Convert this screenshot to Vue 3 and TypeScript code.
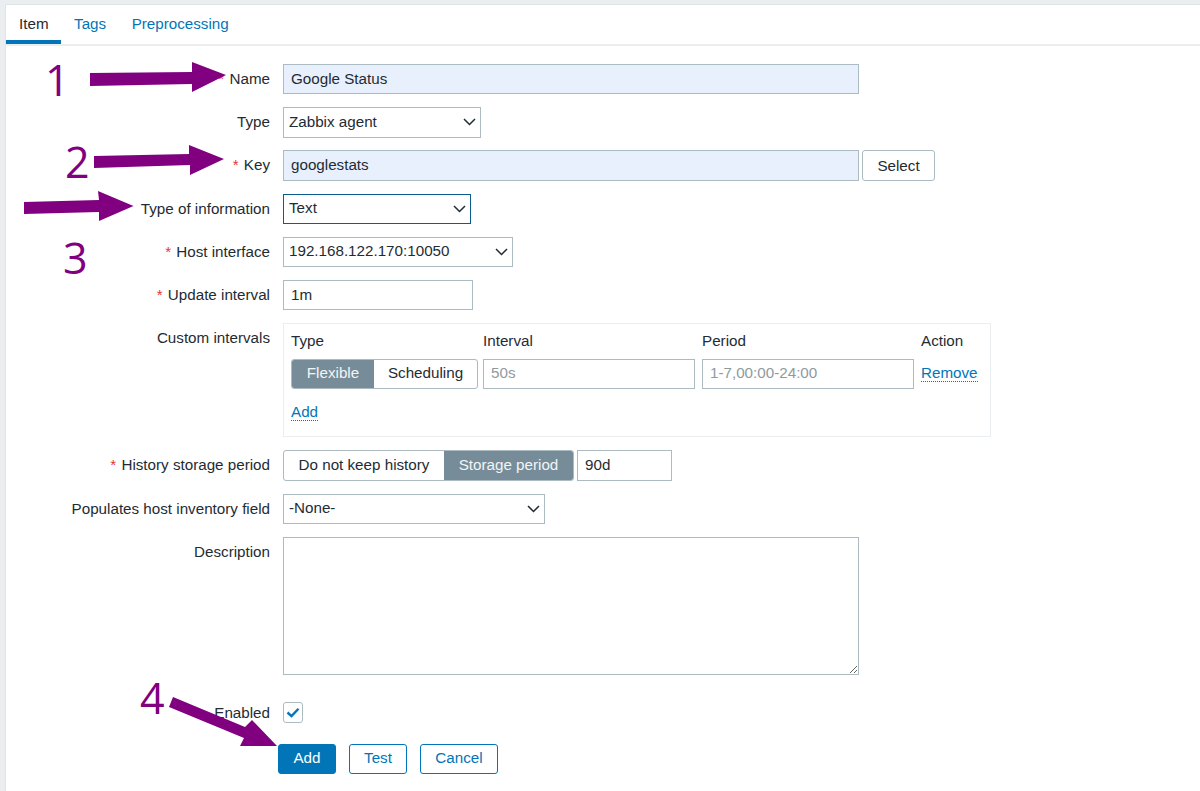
<script setup lang="ts">
const tabs = ['Item', 'Tags', 'Preprocessing'];

const arrows = [
  '90,73 192,72 192,62 226,75 192,92 192,84 90,86',
  '94,156 189,154 189,145 224,159 190,175 190,165 94,168',
  '24,202 99,200 98,191 133.5,206 99,221 99,212 24,214',
  '173,697 245,727 252,720 277,746 240,746 244,738 169,707',
];

const numbers = [
  { text: '1', x: 45, y: 96 },
  { text: '2', x: 65, y: 178 },
  { text: '3', x: 63, y: 274 },
  { text: '4', x: 140, y: 714 },
];
</script>

<template>
  <div class="page">
    <div class="card">
      <div class="tabs">
        <a v-for="(tab, i) in tabs" :key="tab" class="tab" :class="{ active: i === 0 }">{{ tab }}</a>
      </div>

      <form class="form" @submit.prevent>
        <div class="row">
          <label><span class="req">*</span> Name</label>
          <input class="field autofill w-576" value="Google Status" />
        </div>

        <div class="row">
          <label>Type</label>
          <div class="select w-198">
            <span>Zabbix agent</span>
            <svg width="13" height="8" viewBox="0 0 13 8"><path d="M1 1l5.5 5.5L12 1" /></svg>
          </div>
        </div>

        <div class="row">
          <label><span class="req">*</span> Key</label>
          <div class="inline">
            <input class="field autofill w-576" value="googlestats" />
            <button type="button" class="btn-grey">Select</button>
          </div>
        </div>

        <div class="row">
          <label>Type of information</label>
          <div class="select focused w-188">
            <span>Text</span>
            <svg width="13" height="8" viewBox="0 0 13 8"><path d="M1 1l5.5 5.5L12 1" /></svg>
          </div>
        </div>

        <div class="row">
          <label><span class="req">*</span> Host interface</label>
          <div class="select w-230">
            <span>192.168.122.170:10050</span>
            <svg width="13" height="8" viewBox="0 0 13 8"><path d="M1 1l5.5 5.5L12 1" /></svg>
          </div>
        </div>

        <div class="row">
          <label><span class="req">*</span> Update interval</label>
          <input class="field w-190" value="1m" />
        </div>

        <div class="row">
          <label>Custom intervals</label>
          <div class="intervals">
            <div class="interval-grid">
              <div class="head">Type</div>
              <div class="head">Interval</div>
              <div class="head">Period</div>
              <div class="head">Action</div>
              <div class="segment seg-flex">
                <span class="seg on">Flexible</span>
                <span class="seg">Scheduling</span>
              </div>
              <input class="field w-212" placeholder="50s" />
              <input class="field w-212" placeholder="1-7,00:00-24:00" />
              <div class="remove-cell"><a class="link">Remove</a></div>
            </div>
            <a class="link add-link">Add</a>
          </div>
        </div>

        <div class="row hist">
          <label><span class="req">*</span> History storage period</label>
          <div class="inline">
            <div class="segment seg-hist">
              <span class="seg">Do not keep history</span>
              <span class="seg on">Storage period</span>
            </div>
            <input class="field w-95" value="90d" />
          </div>
        </div>

        <div class="row">
          <label>Populates host inventory field</label>
          <div class="select w-262">
            <span>-None-</span>
            <svg width="13" height="8" viewBox="0 0 13 8"><path d="M1 1l5.5 5.5L12 1" /></svg>
          </div>
        </div>

        <div class="row">
          <label>Description</label>
          <textarea class="area"></textarea>
        </div>

        <div class="row enabled">
          <label>Enabled</label>
          <span class="check">
            <svg width="14" height="11" viewBox="0 0 14 11"><path d="M1.5 5.5l4 3.6 7-7.4" /></svg>
          </span>
        </div>

        <div class="row actions">
          <span></span>
          <div class="buttons">
            <button type="button" class="btn primary">Add</button>
            <button type="button" class="btn">Test</button>
            <button type="button" class="btn cancel">Cancel</button>
          </div>
        </div>
      </form>
    </div>

    <!-- hand-drawn annotations over the form -->
    <svg class="notes" width="1200" height="791" viewBox="0 0 1200 791">
      <polygon v-for="(p, i) in arrows" :key="i" :points="p" />
      <text v-for="n in numbers" :key="n.text" :x="n.x" :y="n.y">{{ n.text }}</text>
    </svg>
  </div>
</template>

<style>
html, body { margin: 0; background: #ebeef0; }
</style>

<style scoped>
* { box-sizing: border-box; }

.page {
  position: relative; width: 1200px; height: 791px; overflow: hidden;
  padding: 4px 0 0 6px; background: #ebeef0;
  font-family: "Liberation Sans", Arial, sans-serif; font-size: 15.2px; color: #1f2c33;
}
.card { height: 100%; background: #fff; border-left: 1px solid #dfe4e7; border-top: 1px solid #dfe4e7; margin-left: -1px; }

.tabs { display: flex; height: 41px; border-bottom: 2px solid #ebeef0; }
.tab { height: 39px; padding: 0 12.5px 0 13px; line-height: 38px; color: #0275b8; }
.tab.active { color: #1f2c33; border-bottom: 4px solid #0275b8; }

.form { display: flex; flex-direction: column; gap: 12.8px; padding-top: 18px; }
.row { display: grid; grid-template-columns: 264px 1fr; column-gap: 13px; min-height: 30.4px; }
.row > label { text-align: right; line-height: 29px; white-space: nowrap; }
.req { color: #e33734; margin-right: 1px; }

.inline { display: flex; gap: 3px; align-items: stretch; }

.field {
  height: 30.4px; padding: 0 7px 2px; border: 1.5px solid #acbbc2; background: #fff;
  font: inherit; color: #1f2c33; outline: none;
}
.field::placeholder { color: #8f9a9f; opacity: 1; }
.autofill { background: #e8f0fe; }
.w-576 { width: 576px; }
.w-190 { width: 190px; }
.w-212 { width: 212px; }
.w-95 { width: 95px; }

.select {
  display: flex; align-items: center; justify-content: space-between; height: 30.4px;
  padding: 0 4px 2px 5px; border: 1.5px solid #acbbc2; background: #fff;
}
.select svg { fill: none; stroke: #1f2c33; stroke-width: 1.5; margin-top: 2px; }
.select.focused { border-color: #0c5c8f; }
.w-198 { width: 198px; }
.w-188 { width: 188px; }
.w-230 { width: 230px; }
.w-262 { width: 262px; }

.btn-grey {
  width: 73px; height: 30.4px; border: 1.5px solid #acbbc2; border-radius: 3px; background: #fff;
  font: inherit; color: #1f2c33; padding: 0 0 1px;
}

.intervals { width: 708px; height: 114px; padding: 6px 7px 0; border: 1.5px solid #ebeef0; }
.interval-grid { display: grid; grid-template-columns: 192px 219px 219px 1fr; align-items: center; row-gap: 7.5px; }
.head { line-height: 21px; }

.segment { display: flex; height: 30.4px; border: 1.5px solid #acbbc2; border-radius: 3px; overflow: hidden; }
.seg { display: flex; align-items: center; justify-content: center; padding-bottom: 2px; }
.seg.on { background: #768d99; color: #f2f4f5; }
.seg-flex { width: 187px; }
.seg-flex .seg:first-child { width: 82px; }
.seg-flex .seg:last-child { flex: 1; }
.seg-hist { width: 291px; height: 31px; }
.seg-hist .seg:first-child { width: 160px; }
.seg-hist .seg:last-child { flex: 1; }
.hist .field { height: 31px; }
.hist { min-height: 31px; }

.link { color: #0275b8; border-bottom: 1px dotted #0275b8; line-height: 17px; display: inline-block; }
.remove-cell { margin-top: -2px; }
.add-link { margin-top: 14px; }

.area { width: 576px; height: 138px; border: 1.5px solid #acbbc2; background: #fff; outline: none; display: block; }

.enabled { margin-top: 13px; min-height: 22px; align-items: center; }
.enabled > label { line-height: 24px; }
.check {
  display: flex; align-items: center; justify-content: center; width: 20px; height: 21px;
  border: 1.5px solid #acbbc2; border-radius: 3px;
}
.check svg { fill: none; stroke: #0275b8; stroke-width: 2.4; }

.actions { margin-top: 6px; }
.buttons { display: flex; gap: 13px; margin-left: -5px; }
.btn {
  width: 58px; height: 30.4px; border: 1.5px solid #0275b8; border-radius: 3px; background: #fff;
  font: inherit; color: #0275b8; padding: 0 0 2px;
}
.btn.primary { background: #0275b8; color: #fff; }
.btn.cancel { width: 78px; }

.notes { position: absolute; left: 0; top: 0; pointer-events: none; }
.notes polygon { fill: #800080; }
.notes text { fill: #800080; font-family: "Open Sans", sans-serif; font-size: 43px; }
</style>
